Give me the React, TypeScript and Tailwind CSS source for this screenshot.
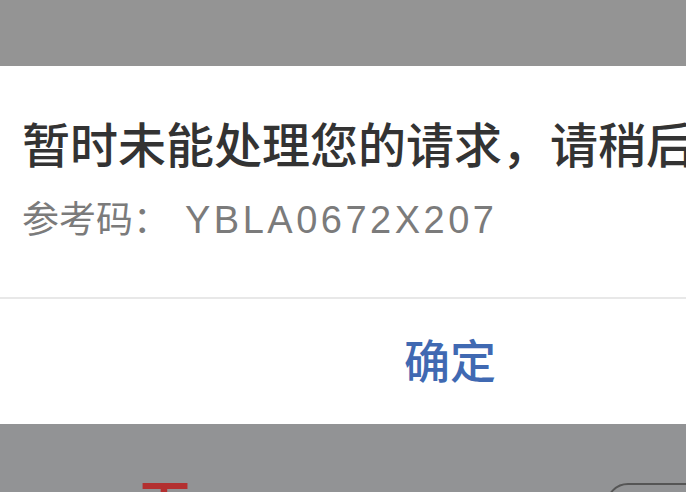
const cjk = { fontFamily: '"Liberation Sans", "Noto Sans CJK SC", sans-serif' }

export default function App() {
  return (
    <div className="w-[686px] h-[492px] overflow-hidden bg-[#939393] flex flex-col" style={cjk}>
      {/* dimmed page above the alert */}
      <div className="h-[66px] shrink-0 bg-[#949494]" />

      {/* alert dialog, wider than the cropped view */}
      <div className="w-[900px] h-[358px] shrink-0 bg-white flex flex-col">
        <div className="h-[231px] pl-[22px] pt-[57px] flex flex-col">
          <p className="text-[48px] leading-[48px] font-medium text-[#333333] whitespace-nowrap">
            暂时未能处理您的请求，请稍后再试。
          </p>
          <p className="mt-[31px] text-[37px] leading-[37px] text-[#7b7b7b] whitespace-nowrap">
            参考码：<span className="ml-[15px] text-[38px] tracking-[3.5px]">YBLA0672X207</span>
          </p>
        </div>
        <div className="h-[2px] bg-[#e8e8e8]" />
        <div className="flex-1 flex items-center justify-center">
          <span className="text-[46px] leading-[46px] font-medium text-[#4069b2]">确定</span>
        </div>
      </div>

      {/* page content peeking out under the alert */}
      <div className="flex-1 bg-[#929395] flex items-start justify-between pt-[56px]">
        <span className="ml-[140px] text-[50px] leading-[50px] font-bold text-[#b33030]">下</span>
        <div className="mt-[3px] w-[120px] h-[60px] -mr-[40px] rounded-[22px] border-2 border-[#555555]" />
      </div>
    </div>
  )
}
